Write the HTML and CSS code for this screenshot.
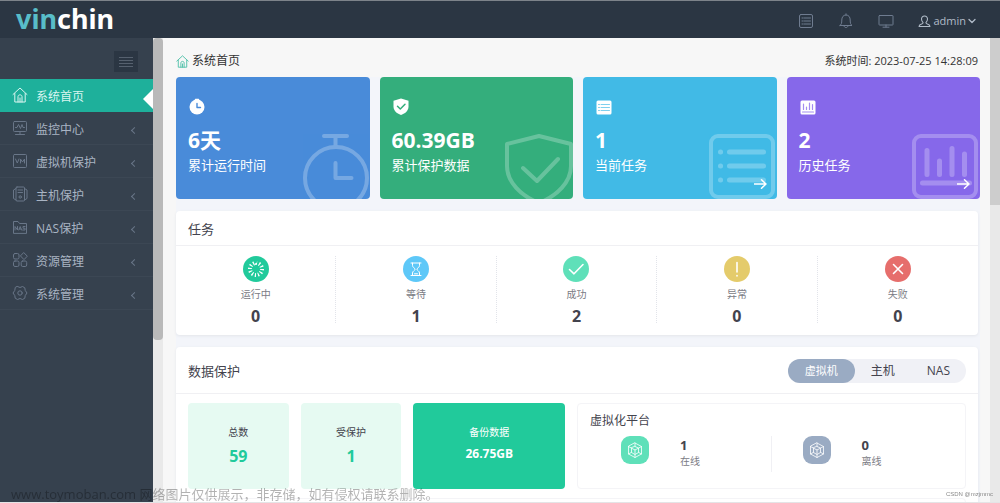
FILE: index.html
```html
<!DOCTYPE html>
<html lang="zh-CN">
<head>
<meta charset="utf-8">
<title>系统首页</title>
<link rel="stylesheet" href="styles.css">
</head>
<body>
<header class="topbar">
  <a class="logo" href="#"><span class="logo-accent">vin</span>chin</a>
  <nav class="tools">
    <button class="tool" aria-label="列表"><svg viewBox="0 0 16 16"><rect x="1.5" y="1.5" width="13" height="13" rx="1.5"/><path d="M4 5h1M6 5h6.500M4 8h1M6 8h6.500M4 11h1M6 11h6.500"/></svg></button>
    <button class="tool" aria-label="通知"><svg viewBox="0 0 16 16"><path d="M2 12.500h12c-1.500-1-1.800-2.500-1.800-5.500 0-2.800-1.500-5-4.200-5S3.800 4.200 3.800 7c0 3-.3 4.500-1.800 5.500zM6 13c.3 2.200 3.700 2.200 4 0M8 2V.8"/></svg></button>
    <button class="tool" aria-label="屏幕"><svg viewBox="0 0 16 16"><rect x="1" y="2.500" width="14" height="9.500" rx=".5"/><path d="M8 12v2M5 14.200h6"/></svg></button>
    <button class="user"><svg viewBox="0 0 16 16"><path d="M6.300 9.300C4.800 8 4.300 6.700 4.300 5c0-2.300 1.500-3.800 3.700-3.800S11.700 2.700 11.700 5c0 1.700-.5 3-2 4.300 0 1.400 1 1.700 2.500 2.200 1.800.6 2.500 1 2.500 2.700H1.300c0-1.700.7-2.100 2.500-2.700 1.500-.5 2.500-.8 2.500-2.200z"/></svg><span>admin</span><svg class="caret" viewBox="0 0 8 8"><path d="M1 2.500l3 3 3-3"/></svg></button>
  </nav>
</header>
<div class="shell">
  <aside class="sidebar">
    <div class="toggle-row"><button class="toggle" aria-label="折叠菜单"><svg viewBox="0 0 14 12"><path d="M0 1.500h14M0 4.500h14M0 7.500h14M0 10.500h14"/></svg></button></div>
    <nav class="menu">
      <a class="item active" href="#"><svg viewBox="0 0 16 16"><path d="M1 7.500L8 1l7 6.500M2.800 6.500V15h10.400V6.500M6 15V9.500c0-2.200 4-2.200 4 0V15M8 11v4"/></svg><span>系统首页</span></a>
      <a class="item" href="#"><svg viewBox="0 0 16 16"><rect x="1.500" y="1.500" width="13" height="10" rx="1"/><path d="M3.500 7.500h1.500l1.500-3 2 4 1.500-4 1 3h1.500M8 11.500v3M3.500 14.500h9"/></svg><span>监控中心</span><i class="chev"></i></a>
      <a class="item" href="#"><svg viewBox="0 0 16 16"><rect x="1.500" y="1.500" width="13" height="13" rx="1"/><path d="M3.500 6l1.800 4L7 6M8.500 10V6l2 3 2-3v4"/></svg><span>虚拟机保护</span><i class="chev"></i></a>
      <a class="item" href="#"><svg viewBox="0 0 16 16"><rect x="4" y="1" width="8.500" height="14" rx="1"/><path d="M4 2.500L1.500 4v8.500L4 14M12.500 2.500L15 4v8.500L12.500 14M6 4h4.500M6 6.500h4.500"/><circle cx="8.200" cy="11" r="1.200"/></svg><span>主机保护</span><i class="chev"></i></a>
      <a class="item" href="#"><svg viewBox="0 0 16 16"><path d="M1.500 14V2.500h4.500l1.500 2h7V14zM3 11V7.500L5.500 11V7.500M6.800 11L8.200 7.500 9.500 11M7.200 10h2M13 7.500h-2v1.700h2V11h-2.300"/></svg><span>NAS保护</span><i class="chev"></i></a>
      <a class="item" href="#"><svg viewBox="0 0 16 16"><rect x="1.500" y="1.500" width="5.500" height="5.500" rx="1.500"/><path d="M12 .8l3.300 3.400L12 7.600 8.700 4.200z"/><rect x="1.500" y="9" width="5.500" height="5.500" rx="1.500"/><rect x="9.200" y="9" width="5.500" height="5.500" rx="1.500"/></svg><span>资源管理</span><i class="chev"></i></a>
      <a class="item" href="#"><svg viewBox="0 0 16 16"><path d="M5.500 1.500l2.500 1 2.500-1 2.300 1.300.4 2.600L15 8l-1.800 2.600-.4 2.600-2.300 1.300-2.500-1-2.500 1-2.300-1.300-.4-2.600L1 8l1.800-2.600.4-2.600z"/><circle cx="8" cy="8" r="2.200"/></svg><span>系统管理</span><i class="chev"></i></a>
    </nav>
  </aside>
  <div class="track track-left"><div class="thumb"></div></div>
  <main class="main">
    <div class="crumbs">
      <h1 class="crumb"><svg viewBox="0 0 16 16"><path d="M1 7.500L8 1l7 6.500M2.800 6.500V15h10.400V6.500M6 15V9.500c0-2.200 4-2.200 4 0V15M8 11v4"/></svg>系统首页</h1>
      <time class="clock">系统时间: 2023-07-25 14:28:09</time>
    </div>
    <div class="content">
      <section class="cards">
        <article class="card blue">
          <svg class="card-icon" viewBox="0 0 16 16"><circle cx="8" cy="8.500" r="7.500" fill="#fff"/><path d="M6.500 1h3" stroke="#fff" stroke-width="1.500"/><path d="M8 5v4h3.500" stroke="#498bd9" stroke-width="1.400" fill="none"/></svg>
          <strong class="card-value">6天</strong><span class="card-label">累计运行时间</span>
          <svg class="card-art" viewBox="0 0 68 67"><circle cx="34" cy="46" r="31"/><path d="M22 4h23M33.500 4v10M33.500 31v15h16"/></svg>
        </article>
        <article class="card green">
          <svg class="card-icon" viewBox="0 0 16 16"><path d="M8 0l7.500 2.200V8c0 4-3 7-7.500 8.500C3.500 15 .5 12 .5 8V2.200z" fill="#fff"/><path d="M4.500 7.800l2.800 2.700L12 5.800" stroke="#34ae7c" stroke-width="1.500" fill="none"/></svg>
          <strong class="card-value">60.39GB</strong><span class="card-label">累计保护数据</span>
          <svg class="card-art" viewBox="0 0 68 67"><path d="M2 12L34 4l32 8v22c0 16-14 30-32 37C16 64 2 50 2 34zM18 36l14 13 21-22"/></svg>
        </article>
        <article class="card cyan">
          <svg class="card-icon" viewBox="0 0 16 16"><rect x=".5" y="2" width="15" height="14" rx="1.500" fill="#fff"/><path d="M2.500 6h1M5 6h8.500M2.500 9h1M5 9h8.500M2.500 12h1M5 12h8.500" stroke="#7fd0ee"/></svg>
          <strong class="card-value">1</strong><span class="card-label">当前任务</span>
          <svg class="card-art" viewBox="0 0 68 67"><rect x="2" y="4" width="62" height="61" rx="7"/><path d="M11.500 20h.1M20.500 20h34M11.500 34h.1M20.500 34h34M11.500 48h.1M20.500 48h34" stroke-width="5"/></svg>
          <a class="go" href="#" aria-label="查看当前任务"><svg viewBox="0 0 13 10"><path d="M0 5h12M7.500.8L12 5 7.500 9.200"/></svg></a>
        </article>
        <article class="card purple">
          <svg class="card-icon" viewBox="0 0 16 16"><rect x=".5" y="2" width="15" height="14" rx="1.500" fill="#fff"/><path d="M3.500 5.500V11M6.500 8.500V11M9.500 4.500V11M12.500 6v5M2.500 13.500h11" stroke="#a48df0" stroke-width="1.200"/></svg>
          <strong class="card-value">2</strong><span class="card-label">历史任务</span>
          <svg class="card-art" viewBox="0 0 68 67"><rect x="2" y="4" width="62" height="61" rx="7"/><path d="M15 18.500v24M27.500 29v13.500M40 16.500v26M52.500 22v20.500M10.500 51h47" stroke-width="5"/></svg>
          <a class="go" href="#" aria-label="查看历史任务"><svg viewBox="0 0 13 10"><path d="M0 5h12M7.500.8L12 5 7.500 9.200"/></svg></a>
        </article>
      </section>

      <section class="panel">
        <h2 class="panel-head">任务</h2>
        <ul class="tasks">
          <li class="task"><svg viewBox="0 0 26 26"><circle cx="13" cy="13" r="13" fill="#21ca9b"/><circle class="spin" cx="13" cy="13" r="6" pathLength="96"/></svg><span>运行中</span><b>0</b></li>
          <li class="task"><svg viewBox="0 0 26 26"><circle cx="13" cy="13" r="13" fill="#5ec8f8"/><path class="thin" d="M8 7h10M8 19.500h10M9.500 7v2.500c0 2 2.500 2.500 2.500 3.800S9.500 15 9.500 17v2.500M16.500 7v2.500c0 2-2.500 2.500-2.500 3.800s2.500 1.700 2.500 3.700v2.500M11.500 17.800h3"/></svg><span>等待</span><b>1</b></li>
          <li class="task"><svg viewBox="0 0 26 26"><circle cx="13" cy="13" r="13" fill="#5fe0b9"/><path d="M6.500 13.500l4.500 4.300 9-9.300"/></svg><span>成功</span><b>2</b></li>
          <li class="task"><svg viewBox="0 0 26 26"><circle cx="13" cy="13" r="13" fill="#e4cb6b"/><path d="M13 6.500v9.500M13 19.500v.5"/></svg><span>异常</span><b>0</b></li>
          <li class="task"><svg viewBox="0 0 26 26"><circle cx="13" cy="13" r="13" fill="#e66e6c"/><path d="M8.500 8.500l9 9M17.500 8.500l-9 9"/></svg><span>失败</span><b>0</b></li>
        </ul>
      </section>

      <section class="panel">
        <div class="panel-head data-head">
          <h2>数据保护</h2>
          <div class="tabs"><button class="tab on">虚拟机</button><button class="tab">主机</button><button class="tab">NAS</button></div>
        </div>
        <div class="stats">
          <div class="stat"><span>总数</span><b>59</b></div>
          <div class="stat"><span>受保护</span><b>1</b></div>
          <div class="stat solid"><span>备份数据</span><b>26.75GB</b></div>
          <div class="platform">
            <h3>虚拟化平台</h3>
            <div class="hosts">
              <div class="host"><svg class="cube online" viewBox="0 0 28 28"><path d="M14 7l6.500 3.500v7.500L14 21.500 7.500 18v-7.500zM7.500 10.500L14 14l6.500-3.500M14 14v7.500M14 7v3.500M7.500 18l3-1.700M20.500 18l-3-1.700M10.500 12v4.500l3.500 2 3.500-2V12L14 10.500z"/></svg><div class="host-text"><b>1</b><span>在线</span></div></div>
              <div class="host"><svg class="cube" viewBox="0 0 28 28"><path d="M14 7l6.500 3.500v7.500L14 21.500 7.500 18v-7.500zM7.500 10.500L14 14l6.500-3.500M14 14v7.500M14 7v3.500M7.500 18l3-1.700M20.500 18l-3-1.700M10.500 12v4.500l3.500 2 3.500-2V12L14 10.500z"/></svg><div class="host-text"><b>0</b><span>离线</span></div></div>
            </div>
          </div>
        </div>
        <div class="next-box"></div>
      </section>
    </div>
  </main>
  <div class="track track-right"><div class="thumb"></div></div>
</div>
<p class="notice">www.toymoban.com 网络图片仅供展示，非存储，如有侵权请联系删除。</p>
<p class="credit">CSDN @mzjmmc</p>
</body>
</html>
```
FILE: styles.css
```css
* { box-sizing: border-box; }
body {
  margin: 0;
  height: 100vh;
  display: flex;
  flex-direction: column;
  overflow: hidden;
  border-bottom: 1px solid #e4e4e6;
  background: #f7f7f7;
  color: #43434d;
  font: 12px/16px "Open Sans", "Noto Sans CJK SC", sans-serif;
}
h1, h2, h3, p, ul { margin: 0; padding: 0; font-weight: 400; }
button { border: 0; padding: 0; background: none; color: inherit; font: inherit; }
a { color: inherit; text-decoration: none; }
svg { display: block; flex: none; fill: none; stroke-linecap: round; stroke-linejoin: round; }

/* Top bar */
.topbar {
  flex: none;
  height: 38px;
  display: flex;
  align-items: center;
  justify-content: space-between;
  padding: 0 24px 0 16px;
  border-top: 1px solid #7d838a;
  background: #2b3643;
}
.logo { padding-bottom: 2px; color: #fff; font-size: 27px; line-height: 34px; font-weight: 700; font-family: "Noto Sans", sans-serif; }
.logo-accent { color: #58bdc9; }
.tools { display: flex; align-items: center; gap: 24px; padding-top: 3px; }
.tools svg { width: 16px; height: 16px; stroke: #6f7c90; }
.tools .user { display: flex; align-items: center; gap: 2px; color: #b0bbc8; font-size: 11px; }
.tools .user svg { width: 13px; height: 13px; stroke: #b0bbc8; stroke-width: 1.3; }
.tools .user .caret { width: 8px; height: 8px; }

/* Sidebar */
.shell { flex: 1; min-height: 0; display: flex; }
.sidebar { flex: none; width: 153px; background: #36414e; color: #a9b4c3; }
.toggle-row { display: flex; justify-content: flex-end; padding: 13px 15px 7px; }
.toggle { width: 24px; height: 21px; display: grid; place-items: center; background: #2b3643; }
.toggle svg { width: 14px; height: 12px; stroke: #56616f; }
.item {
  position: relative;
  display: flex;
  align-items: center;
  gap: 8px;
  height: 33px;
  padding: 0 16px 0 12px;
  border-bottom: 1px solid #3c4754;
}
.item span { padding-top: 3px; }
.item svg { width: 16px; height: 16px; stroke: #697688; }
.item.active { background: #1eb09b; border-color: #1eb09b; color: #d9f5f0; }
.item.active svg { stroke: #d9f5f0; }
.active::after {
  content: "";
  position: absolute;
  right: 0;
  top: 10px;
  border: 10px solid transparent;
  border-left: 0;
  border-right-color: #fff;
}
.chev {
  width: 5px;
  height: 5px;
  margin: 5px 0 0 auto;
  border: solid #697688;
  border-width: 0 0 1px 1px;
  transform: rotate(45deg);
}

/* Scroll tracks */
.track { flex: none; width: 10px; background: #e9e9e9; }
.track-left .thumb { height: 65%; border-radius: 4px; background: #b9b9b9; }
.track-right .thumb { height: 36%; background: #cdcdcd; }

/* Main */
.main { flex: 1; min-width: 0; overflow: hidden; padding: 0 10px 0 13px; }
.crumbs { display: flex; align-items: center; justify-content: space-between; height: 39px; padding: 7px 2px 0 0; }
.crumb { display: flex; align-items: center; gap: 3px; font-size: 12px; color: #333; }
.crumb svg { width: 13px; height: 13px; stroke: #56c2ac; stroke-width: 1.2; }
.clock { font-size: 11px; color: #333; }
.content { background: #f3f5fa; }

.cards { display: grid; grid-template-columns: repeat(4, 1fr); gap: 10px; }
.card {
  position: relative;
  overflow: hidden;
  display: flex;
  flex-direction: column;
  height: 122px;
  padding: 21px 12px 0;
  border-radius: 4px;
  color: #fff;
}
.blue { background: #498bd9; }
.green { background: #34ae7c; }
.cyan { background: #41bae6; }
.purple { background: #8668ea; }
.card-icon { width: 16px; height: 17px; margin-left: 1px; }
.card-value { margin-top: 11px; font-size: 21px; line-height: 28px; }
.card-label { margin-top: 1px; font-size: 13px; line-height: 20px; }
.card-art {
  position: absolute;
  right: 0;
  bottom: 0;
  width: 68px;
  height: 67px;
  stroke: #fff;
  stroke-width: 4;
  opacity: .25;
}
.go { position: absolute; right: 10px; bottom: 10px; }
.go svg { width: 13px; height: 10px; stroke: #fff; stroke-width: 1.5; }

.panel { margin: 12px 2px 0 0; border-radius: 4px; background: #fff; box-shadow: 0 1px 3px #e3e5ea; }
.panel-head { padding: 9px 12px 7px; border-bottom: 1px solid #f0f0f3; font-size: 13px; line-height: 18px; }
.data-head { display: flex; align-items: center; justify-content: space-between; padding: 12px 12px 10px; }
.data-head h2 { font-size: 13px; }

.tasks { display: grid; grid-template-columns: repeat(5, 1fr); padding: 10px 0 12px; list-style: none; }
.task { display: flex; flex-direction: column; align-items: center; border-right: 1px dotted #e2e4ea; height: 67px; }
.task:last-child { border: 0; }
.task svg { width: 26px; height: 26px; stroke: #fff; stroke-width: 1.6; }
.task circle { stroke: none; }
.task .thin { stroke-width: 1; }
.task .spin { stroke: #fff; stroke-width: 4; stroke-linecap: butt; stroke-dasharray: 3 5; }
.task span { margin-top: 4px; font-size: 10px; color: #7b7b84; }
.task b { margin-top: 4px; font-size: 16px; line-height: 20px; }

.tabs { display: flex; border-radius: 12px; background: #f0f1f6; font-size: 12px; }
.tab { height: 24px; padding: 0 16px; border-radius: 12px; font-size: 12px; }
.tab.on { padding: 0 17px; background: #9aabc3; color: #fff; font-size: 11px; }

.stats { display: grid; grid-template-columns: 101fr 101fr 152fr 390fr; gap: 12px; padding: 9px 12px; }
.stat {
  display: flex;
  flex-direction: column;
  align-items: center;
  height: 86px;
  padding-top: 21px;
  border-radius: 4px;
  background: #e6faf2;
}
.stat span { font-size: 10px; }
.stat b { margin-top: 6px; color: #21ca9b; font-size: 16px; line-height: 20px; }
.stat.solid { background: #21ca9b; color: #fff; }
.stat.solid b { margin-top: 4px; color: #fff; font-size: 12px; }
.platform { padding: 9px 12px; border: 1px solid #f4f4f7; border-radius: 4px; }
.platform h3 { font-size: 12px; }
.hosts { display: grid; grid-template-columns: 1fr 1fr; margin-top: 7px; }
.host { display: flex; gap: 31px; height: 36px; padding-left: 31px; }
.host:first-child { border-right: 1px solid #f0f0f4; }
.cube { width: 28px; height: 28px; border-radius: 9px; background: #9aabc3; stroke: #fff; stroke-width: .8; }
.online { background: #5fe0b9; }
.host-text { display: flex; flex-direction: column; }
.host-text b { font-size: 13px; line-height: 18px; }
.host-text span { font-size: 10px; line-height: 14px; color: #7b7b84; }
.next-box { height: 40px; margin: 0 12px; border: 1px solid #f4f4f7; border-radius: 4px; }

/* Overlaid notices */
.notice { position: fixed; left: 11px; bottom: 1px; font-size: 13px; color: rgba(0, 0, 0, .3); }
.credit { position: fixed; right: 7px; bottom: 3px; font: 6px/12px "Liberation Sans", sans-serif; color: #888; }
```
